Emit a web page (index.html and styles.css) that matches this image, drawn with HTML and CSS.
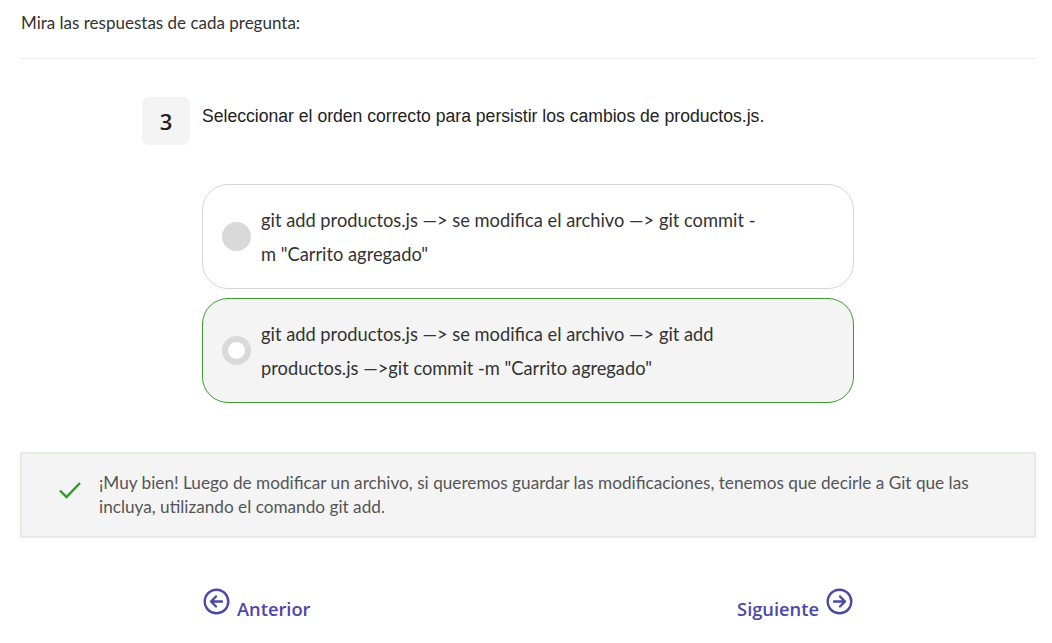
FILE: index.html
```html
<!DOCTYPE html>
<html lang="es">
<head>
<meta charset="utf-8">
<link rel="stylesheet" href="styles.css">
</head>
<body>
<div class="page">
  <p class="intro">Mira las respuestas de cada pregunta:</p>
  <hr class="sep">
  <div class="question">
    <div class="qnum">3</div>
    <div class="qtext">Seleccionar el orden correcto para persistir los cambios de productos.js.</div>
  </div>
  <div class="options">
    <div class="option">
      <span class="radio"></span>
      <span class="otext">git add productos.js —&gt; se modifica el archivo —&gt; git commit -<br>m "Carrito agregado"</span>
    </div>
    <div class="option correct">
      <span class="radio ring"></span>
      <span class="otext">git add productos.js —&gt; se modifica el archivo —&gt; git add<br>productos.js —&gt;git commit -m "Carrito agregado"</span>
    </div>
  </div>
  <div class="feedback">
    <svg class="check" width="24" height="18" viewBox="0 0 24 18"><path d="M2 9.5 L8.5 16 L22 2" fill="none" stroke="#2e9b22" stroke-width="2.4"/></svg>
    <p class="ftext">¡Muy bien! Luego de modificar un archivo, si queremos guardar las modificaciones, tenemos que decirle a Git que las<br>incluya, utilizando el comando git add.</p>
  </div>
  <div class="nav">
    <a class="navlink">
      <svg width="27" height="27" viewBox="0 0 27 27"><circle cx="13.5" cy="13.5" r="11.8" fill="none" stroke="#4b48a8" stroke-width="2.4"/><path d="M19 13.5 H8.5 M13 8.5 L8 13.5 L13 18.5" fill="none" stroke="#4b48a8" stroke-width="2.4" stroke-linecap="round" stroke-linejoin="round"/></svg>
      <span class="navtxt">Anterior</span>
    </a>
    <a class="navlink">
      <span class="navtxt">Siguiente</span>
      <svg width="27" height="27" viewBox="0 0 27 27"><circle cx="13.5" cy="13.5" r="11.8" fill="none" stroke="#4b48a8" stroke-width="2.4"/><path d="M8 13.5 H18.5 M14 8.5 L19 13.5 L14 18.5" fill="none" stroke="#4b48a8" stroke-width="2.4" stroke-linecap="round" stroke-linejoin="round"/></svg>
    </a>
  </div>
</div>
</body>
</html>
```

FILE: styles.css
```css
* { box-sizing: border-box; }
body {
  margin: 0;
  background: #fff;
  font-family: Lato, "Open Sans", sans-serif;
  color: #333;
}
.page {
  padding: 0 16px 0 20px;
}
.intro {
  margin: 0;
  padding: 12px 0 0 1px;
  font-size: 17px;
  line-height: 21px;
  color: #333;
}
.sep {
  border: 0;
  border-top: 1px solid #ececec;
  margin: 25px 0 0 0;
}
.question {
  display: flex;
  align-items: flex-start;
  margin: 38px 0 0 122px;
  gap: 12px;
}
.qnum {
  width: 48px;
  height: 48px;
  background: #f4f4f4;
  border-radius: 7px;
  display: flex;
  align-items: center;
  justify-content: center;
  font-family: "Open Sans", sans-serif;
  font-weight: 600;
  font-size: 22px;
  color: #222;
}
.qtext {
  font-family: "Liberation Sans", Arial, sans-serif;
  font-size: 17.6px;
  color: #222;
  padding-top: 9px;
}
.options {
  margin: 39px 0 0 182px;
  width: 652px;
  display: flex;
  flex-direction: column;
  gap: 9px;
}
.option {
  height: 105px;
  border: 1px solid #d6d6d6;
  border-radius: 26px;
  display: flex;
  align-items: center;
  padding-left: 19px;
  background: #fff;
}
.option.correct {
  border-color: #3d9a2e;
  background: #f4f4f4;
}
.radio {
  width: 29px;
  height: 29px;
  border-radius: 50%;
  background: #d9d9d9;
  flex: none;
}
.radio.ring {
  background: #fff;
  border: 6px solid #d9d9d9;
}
.otext {
  margin-left: 10px;
  font-size: 18.3px;
  line-height: 34px;
  color: #333;
}
.feedback {
  margin-top: 49px;
  height: 86px;
  background: #f4f4f4;
  border: 2px solid #e1eedd;
  display: flex;
  align-items: center;
  padding-left: 36px;
}
.check { flex: none; margin-top: -10px; }
.ftext {
  margin: 0 0 0 17px;
  font-size: 17.2px;
  line-height: 24px;
  color: #555;
}
.nav {
  display: flex;
  justify-content: space-between;
  margin: 43px 0 0 183px;
  width: 650px;
}
.navlink {
  display: flex;
  align-items: center;
  gap: 7px;
  color: #4b48a8;
}
.navtxt {
  font-family: "Open Sans", sans-serif;
  font-weight: 600;
  font-size: 18.3px;
  padding-top: 15px;
}
```
